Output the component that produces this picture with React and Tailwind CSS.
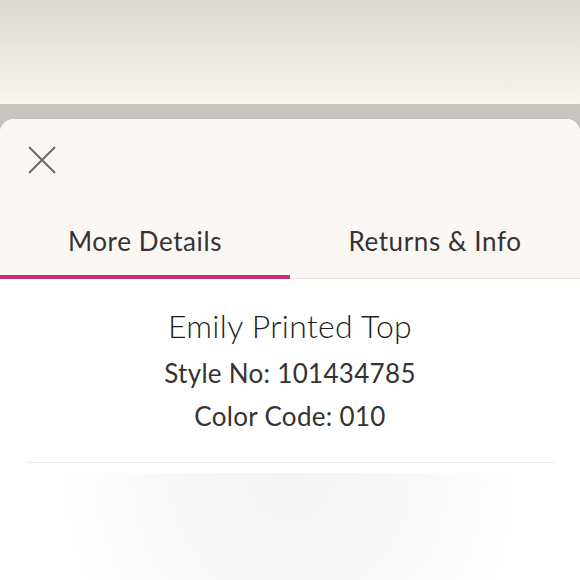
import React, { useState } from "react";

const XIcon = () => (
  <svg width="28" height="28" viewBox="0 0 28 28" fill="none">
    <path d="M1 1L27 27M27 1L1 27" stroke="#6b6b6b" strokeWidth="2" />
  </svg>
);

const App = () => {
  const [tab, setTab] = useState("details");

  return (
    <div
      className="w-[580px] h-[580px] overflow-hidden flex flex-col bg-[#c8c5c0]"
      style={{ fontFamily: "Lato, 'Open Sans', sans-serif" }}
    >
      <div className="h-[104px] shrink-0 bg-gradient-to-b from-[#dcd9d3] to-[#f8f5f1]" />
      <div className="h-[15px] shrink-0 bg-[#c8c5c0]" />

      <div className="flex-1 flex flex-col bg-white rounded-t-[14px] overflow-hidden">
        <div className="bg-[#fbf7f4] shrink-0">
          <div className="pl-[28px] pt-[27px] h-[88px]">
            <button className="block">
              <XIcon />
            </button>
          </div>
          <div className="flex">
            <button
              onClick={() => setTab("details")}
              className={
                "flex-1 h-[72px] pt-[1px] text-[26px] tracking-[0.6px] text-[#333] border-b-4 " +
                (tab === "details" ? "border-[#c92f7b]" : "border-transparent")
              }
            >
              More Details
            </button>
            <button
              onClick={() => setTab("returns")}
              className={
                "flex-1 h-[72px] pt-[1px] text-[26px] tracking-[0.6px] text-[#333] border-b-4 " +
                (tab === "returns" ? "border-[#c92f7b]" : "border-transparent")
              }
            >
              Returns &amp; Info
            </button>
          </div>
          <div className="h-px bg-[#e4e1de] -mt-px" />
        </div>

        <div className="flex flex-col items-center pt-[26px] text-[#333] shrink-0">
          <h2 className="text-[32px] font-light leading-[42px] tracking-[0.3px] text-[#1f1f1f]">
            Emily Printed Top
          </h2>
          <p className="text-[26px] leading-[34px] mt-[9px] tracking-[0.3px]">
            Style No: 101434785
          </p>
          <p className="text-[26px] leading-[34px] mt-[9px] tracking-[0.3px]">
            Color Code: 010
          </p>
        </div>

        <div className="mx-[26px] mt-[29px] h-px shrink-0 bg-[#ececec]" />

        <div className="flex-1 flex justify-center pt-[10px]">
          <div className="w-[450px] h-[240px] bg-[radial-gradient(ellipse_at_50%_0%,#f3f3f3_0%,#fafafa_45%,#ffffff_75%)] rounded-b-full" />
        </div>
      </div>
    </div>
  );
};

export default App;
